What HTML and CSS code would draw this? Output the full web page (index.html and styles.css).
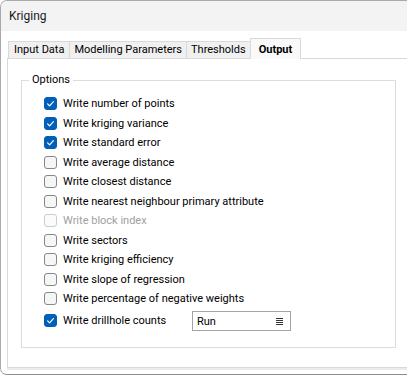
FILE: index.html
```html
<!DOCTYPE html>
<html>
<head>
<meta charset="utf-8">
<title>Kriging</title>
<link rel="stylesheet" href="styles.css">
</head>
<body>
<div class="window">
  <div class="titlebar">Kriging</div>
  <div class="client">
    <div class="tabs">
      <div class="tab">Input Data</div>
      <div class="tab">Modelling Parameters</div>
      <div class="tab">Thresholds</div>
      <div class="tab active">Output</div>
    </div>
    <div class="pane">
      <fieldset class="group">
        <legend>Options</legend>
        <ul class="opts">
          <li class="opt"><span class="cb on"><svg viewBox="0 0 13 13" width="13" height="13"><polyline points="3.6,6.9 5.6,8.9 9.4,4.6"/></svg></span><span>Write number of points</span></li>
          <li class="opt"><span class="cb on"><svg viewBox="0 0 13 13" width="13" height="13"><polyline points="3.6,6.9 5.6,8.9 9.4,4.6"/></svg></span><span>Write kriging variance</span></li>
          <li class="opt"><span class="cb on"><svg viewBox="0 0 13 13" width="13" height="13"><polyline points="3.6,6.9 5.6,8.9 9.4,4.6"/></svg></span><span>Write standard error</span></li>
          <li class="opt"><span class="cb"></span><span>Write average distance</span></li>
          <li class="opt"><span class="cb"></span><span>Write closest distance</span></li>
          <li class="opt"><span class="cb"></span><span>Write nearest neighbour primary attribute</span></li>
          <li class="opt disabled"><span class="cb"></span><span>Write block index</span></li>
          <li class="opt"><span class="cb"></span><span>Write sectors</span></li>
          <li class="opt"><span class="cb"></span><span>Write kriging efficiency</span></li>
          <li class="opt"><span class="cb"></span><span>Write slope of regression</span></li>
          <li class="opt"><span class="cb"></span><span>Write percentage of negative weights</span></li>
          <li class="opt opt-combo"><span class="cb on"><svg viewBox="0 0 13 13" width="13" height="13"><polyline points="3.6,6.9 5.6,8.9 9.4,4.6"/></svg></span><span class="label-wide">Write drillhole counts</span>
            <div class="combo"><span>Run</span><svg class="menu-icon" viewBox="0 0 7 7" width="7" height="7"><path d="M0 0.5H7M0 2.5H7M0 4.5H7M0 6.5H7"/></svg></div>
          </li>
        </ul>
      </fieldset>
    </div>
  </div>
</div>
</body>
</html>
```
FILE: styles.css
```css
html, body {
  margin: 0;
  padding: 0;
  overflow: hidden;
  background: #ffffff;
}

body {
  font-family: Roboto, "Liberation Sans", Arial, sans-serif;
  font-size: 11px;
  color: #000000;
}

.window {
  width: 407px;
  height: 375px;
  box-sizing: border-box;
  border: 1px solid #a9a9a9;
  border-right: none;
  border-bottom-color: #8c8c8c;
  border-radius: 7px 0 0 7px;
  display: flex;
  flex-direction: column;
  overflow: hidden;
  background: #ffffff;
}

.titlebar {
  height: 30px;
  flex: 0 0 30px;
  background: #f3f3f3;
  padding-left: 8px;
  font-size: 12px;
  line-height: 30px;
  color: #1a1a1a;
}

.client {
  flex: 1;
  padding: 7px 0 0 6px;
  background: #ffffff;
}

.tabs {
  display: flex;
  align-items: flex-end;
  height: 20px;
  margin-left: 1px;
}

.tab {
  height: 17px;
  box-sizing: border-box;
  border: 1px solid #d9d9d9;
  border-bottom: none;
  background: #f0f0f0;
  padding: 0 4px;
  line-height: 16px;
  margin-right: -1px;
  white-space: nowrap;
}

.tab:first-child {
  padding: 0 5px;
}

.tab.active {
  position: relative;
  z-index: 1;
  height: 21px;
  margin-bottom: -1px;
  background: #f9f9f9;
  font-weight: bold;
  padding: 1px 8px 0;
  line-height: 19px;
}

.pane {
  height: 310px;
  box-sizing: border-box;
  border: 1px solid #d9d9d9;
  border-right: none;
  box-shadow: 0 2px 0 #ebebeb;
}

.group {
  margin: 14px 0 0 13px;
  width: 375px;
  height: 275px;
  box-sizing: border-box;
  border: 1px solid #dcdcdc;
  padding: 0 0 0 7px;
}

.group legend {
  padding: 0 3px;
  line-height: 14px;
  color: #000000;
}

.opts {
  list-style: none;
  margin: 7px 0 0 15px;
  padding: 0;
}

.opt {
  display: flex;
  align-items: center;
  gap: 6px;
  height: 19.5px;
  white-space: nowrap;
}

.opt-combo {
  height: 24px;
}

.cb {
  width: 13px;
  height: 13px;
  flex: 0 0 13px;
  box-sizing: border-box;
  border: 1px solid #878787;
  border-radius: 3px;
  background: #f6f6f6;
  display: flex;
}

.cb.on {
  background: #005fb8;
  border-color: #005fb8;
}

.cb svg {
  display: block;
  margin: -1px;
}

.cb polyline {
  fill: none;
  stroke: #ffffff;
  stroke-width: 1.2;
  stroke-linecap: round;
  stroke-linejoin: round;
}

.opt.disabled {
  color: #a0a0a0;
}

.opt.disabled .cb {
  border-color: #cccccc;
  background: #fbfbfb;
}

.label-wide {
  width: 123px;
}

.combo {
  width: 99px;
  height: 20px;
  box-sizing: border-box;
  border: 1px solid #a3a3a3;
  display: flex;
  align-items: center;
  justify-content: space-between;
  padding: 0 7px 0 4px;
  background: #ffffff;
  margin-top: 1px;
}

.menu-icon path {
  stroke: #333333;
  stroke-width: 1;
  fill: none;
}
```
